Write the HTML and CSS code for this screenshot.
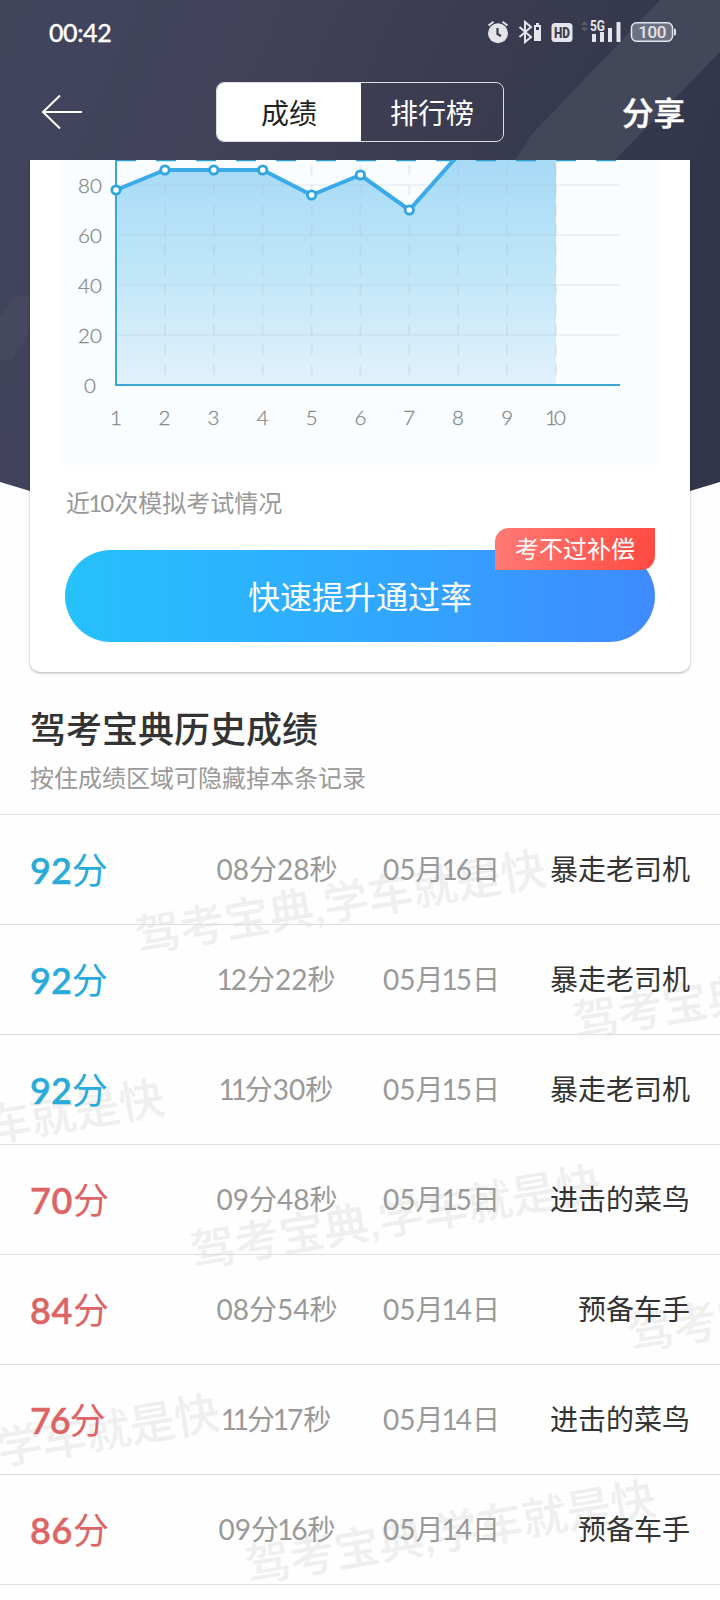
FILE: index.html
```html
<!DOCTYPE html>
<html lang="zh-CN">
<head>
<meta charset="utf-8">
<title>成绩</title>
<link rel="stylesheet" href="styles.css">
</head>
<body>
<div class="screen">
  <svg class="backdrop" width="720" height="510" viewBox="0 0 720 510" aria-hidden="true">
    <defs>
      <linearGradient id="night" x1="0" y1="0" x2="1" y2="0.3">
        <stop offset="0" stop-color="#41465d"/>
        <stop offset="0.35" stop-color="#41415a"/>
        <stop offset="0.6" stop-color="#3b3c51"/>
        <stop offset="1" stop-color="#32364a"/>
      </linearGradient>
    </defs>
    <path d="M0 0H720V482L690 491L360 510L30 491L0 482Z" fill="url(#night)"/>
    <path d="M660 0H720V52L615 160H515L533 133Z" fill="#424759"/>
    <path d="M0 318L14 296H30V330L12 360H0Z" fill="#4b5062" fill-opacity=".45"/>
  </svg>

  <header class="top">
    <div class="status">
      <span class="clock">00:42</span>
      <svg class="status-icons" width="196" height="28" viewBox="484 18 196 28" fill="#e4e4ea">
        <circle cx="498" cy="33.200" r="10"/>
        <path d="M488.500 25.500L493.500 21.800M507.500 25.500L502.500 21.800" stroke="#e4e4ea" stroke-width="2" fill="none"/>
        <path d="M497.500 28V34L501 36" stroke="#3b3b51" stroke-width="2.200" fill="none"/>
        <path d="M519.500 27L531 37L525 42V22L531 27L519.500 37" stroke="#e4e4ea" stroke-width="2" fill="none"/>
        <path fill-rule="evenodd" d="M536 23h3v2h2v16h-7V25h2ZM536 27v3h3v-3Z"/>
        <rect x="551.500" y="23" width="21" height="19" rx="3.500"/>
        <text class="hd" x="562" y="37.500" text-anchor="middle" textLength="16" lengthAdjust="spacingAndGlyphs">HD</text>
        <path d="M581 25l3.500-4 3.500 4ZM581 27.500h7l-3.500 4Z" fill="#5d5f70"/>
        <text class="net" x="590" y="30.500" textLength="15" lengthAdjust="spacingAndGlyphs">5G</text>
        <path d="M592 34h4v8h-4ZM600 32h4v10h-4ZM608 28h4v14h-4ZM616.500 22h4v20h-4Z"/>
        <rect x="631.500" y="22.800" width="41" height="18.400" rx="5" fill="#6d7080" stroke="#e4e4ea" stroke-width="1.500"/>
        <path d="M674 28.500q2 0 2 1.500v4q0 1.500-2 1.500Z"/>
        <text class="charge" x="652.300" y="37.700" text-anchor="middle" textLength="28">100</text>
      </svg>
    </div>
    <nav class="bar">
      <svg class="back" width="42" height="36" viewBox="0 0 42 36" fill="none" stroke="#fff" stroke-width="2"><path d="M19 1.500L2 18L19 34.500M2 18H41"/></svg>
      <div class="tabs"><span class="tab tab-on">成绩</span><span class="tab">排行榜</span></div>
      <span class="share">分享</span>
    </nav>
  </header>

  <section class="card">
    <svg class="chart" width="600" height="305" viewBox="60 160 600 305">
      <defs>
        <linearGradient id="area" x1="0" y1="160" x2="0" y2="385" gradientUnits="userSpaceOnUse">
          <stop offset="0" stop-color="#a7daf6"/>
          <stop offset="0.4" stop-color="#bae4f8"/>
          <stop offset="1" stop-color="#e2f1fc"/>
        </linearGradient>
      </defs>
      <rect x="60" y="160" width="600" height="305" fill="#f9fdff"/>
      <path d="M116 190L164.900 170H262.700L311.600 195L360.400 175L409.300 210L458.200 155H556V385H116Z" fill="url(#area)"/>
      <path d="M116 185H620M116 235H620M116 285H620M116 335H620" stroke="#b0b8bc" stroke-opacity=".15" stroke-width="2"/>
      <path d="M165 165V385M214 165V385M262.700 165V385M311.600 165V385M360.500 165V385M409.300 165V385M458.200 165V385M507 165V385M556 165V385" stroke="#b0b8bc" stroke-opacity=".24" stroke-width="2" stroke-dasharray="10 10"/>
      <path d="M116 160V385H620" fill="none" stroke="#3ba5d3" stroke-width="2"/>
      <path d="M116 160H620" stroke="#2f9fd0" stroke-width="2.400" stroke-dasharray="20 20"/>
      <path d="M116 190L164.900 170H262.700L311.600 195L360.400 175L409.300 210L458.200 155" fill="none" stroke="#3aabe8" stroke-width="4"/>
      <g fill="#fff" stroke="#2ea5e0" stroke-width="2.800">
        <circle cx="116" cy="190" r="4.200"/><circle cx="164.900" cy="170" r="4.200"/><circle cx="213.800" cy="170" r="4.200"/><circle cx="262.700" cy="170" r="4.200"/><circle cx="311.600" cy="195" r="4.200"/><circle cx="360.400" cy="175" r="4.200"/><circle cx="409.300" cy="210" r="4.200"/>
      </g>
      <g class="axis">
        <text x="90" y="193">80</text><text x="90" y="243">60</text><text x="90" y="293">40</text><text x="90" y="343">20</text><text x="90" y="393">0</text>
        <text x="116" y="425">1</text><text x="164.500" y="425">2</text><text x="213.500" y="425">3</text><text x="262.700" y="425">4</text><text x="311.600" y="425">5</text><text x="360.500" y="425">6</text><text x="409.300" y="425">7</text><text x="458" y="425">8</text><text x="507.300" y="425">9</text><text x="555.500" y="425" textLength="21">10</text>
      </g>
    </svg>
    <p class="caption">近<b class="one">1</b>0次模拟考试情况</p>
    <div class="cta"><span class="cta-text">快速提升通过率</span><span class="badge">考不过补偿</span></div>
  </section>

  <section class="history">
    <h1 class="title">驾考宝典历史成绩</h1>
    <p class="hint">按住成绩区域可隐藏掉本条记录</p>
    <div class="records">
      <svg class="watermark" width="720" height="786" viewBox="0 814 720 786" aria-hidden="true">
        <text transform="translate(138.500 952) rotate(-9.600)">驾考宝典,学车就是快</text>
        <text transform="translate(576.500 1037) rotate(-9.600)">驾考宝典,学车就是快</text>
        <text transform="translate(-243 1181) rotate(-9.600)">驾考宝典,学车就是快</text>
        <text transform="translate(193.500 1267) rotate(-9.600)">驾考宝典,学车就是快</text>
        <text transform="translate(631.500 1350) rotate(-9.600)">驾考宝典,学车就是快</text>
        <text transform="translate(-188 1496) rotate(-9.600)">驾考宝典,学车就是快</text>
        <text transform="translate(248.500 1582) rotate(-9.600)">驾考宝典,学车就是快</text>
      </svg>
      <div class="row"><span class="score pass"><b>92</b>分</span><span class="time">08分28秒</span><span class="date">05月<b class="one">1</b>6日</span><span class="name">暴走老司机</span></div>
      <div class="row"><span class="score pass"><b>92</b>分</span><span class="time"><b class="one">1</b>2分22秒</span><span class="date">05月<b class="one">1</b>5日</span><span class="name">暴走老司机</span></div>
      <div class="row"><span class="score pass"><b>92</b>分</span><span class="time"><b class="one">1</b><b class="one">1</b>分30秒</span><span class="date">05月<b class="one">1</b>5日</span><span class="name">暴走老司机</span></div>
      <div class="row"><span class="score fail"><b class="wide">70</b>分</span><span class="time">09分48秒</span><span class="date">05月<b class="one">1</b>5日</span><span class="name">进击的菜鸟</span></div>
      <div class="row"><span class="score fail"><b class="wide">84</b>分</span><span class="time">08分54秒</span><span class="date">05月<b class="one">1</b>4日</span><span class="name">预备车手</span></div>
      <div class="row"><span class="score fail"><b class="tight">76</b>分</span><span class="time"><b class="one">1</b><b class="one">1</b>分<b class="one">1</b>7秒</span><span class="date">05月<b class="one">1</b>4日</span><span class="name">进击的菜鸟</span></div>
      <div class="row"><span class="score fail"><b class="wide">86</b>分</span><span class="time">09分<b class="one">1</b>6秒</span><span class="date">05月<b class="one">1</b>4日</span><span class="name">预备车手</span></div>
    </div>
  </section>
</div>
</body>
</html>
```
FILE: styles.css
```css
* { box-sizing: border-box; margin: 0; padding: 0; }
body { background: #fff; font-family: Lato, "Noto Sans CJK SC", sans-serif; color: #333; }
.screen { position: relative; width: 720px; height: 1600px; overflow: hidden; background: #fefefe; }
.backdrop { position: absolute; left: 0; top: 0; }

.top { position: relative; height: 160px; }
.status { height: 64px; display: flex; justify-content: space-between; align-items: center; padding: 0 40px 0 49px; }
.clock { color: #fff; font-size: 25px; line-height: 30px; font-weight: 500; letter-spacing: -.4px; -webkit-text-stroke: .3px #fff; }
.status-icons { display: block; }
.hd { font: 900 14px Roboto, sans-serif; fill: #3b3b51; }
.net { font: 700 14px Roboto, sans-serif; }
.charge { font: 500 17px Roboto, sans-serif; fill: #e4e4ea; }
.bar { display: grid; grid-template-columns: 1fr 288px 1fr; align-items: center; height: 96px; padding: 0 35px 0 41px; }
.back { display: block; }
.tabs { display: flex; height: 60px; border: 1px solid #dcdce2; border-radius: 8px; overflow: hidden; margin-left: -3px; margin-right: 3px; }
.tab { flex: 1; display: flex; align-items: center; justify-content: center; color: #fff; font-size: 28px; }
.tab-on { flex: 0 0 144px; background: #fff; color: #222; }
.share { justify-self: end; margin-top: -3px; color: #fff; font-size: 31.500px; font-weight: 500; -webkit-text-stroke: .5px #fff; }

.card { position: relative; height: 512px; margin: 0 30px; padding: 0 30px; background: #fff; border-radius: 0 0 10px 10px; box-shadow: 0 1px 3px rgba(0, 0, 0, .3); clip-path: inset(0 -6px -6px); }
.chart { display: block; }
.axis text { font-family: Lato, sans-serif; font-size: 20.500px; font-weight: 300; fill: #808080; stroke: #909090; stroke-width: .3px; text-anchor: middle; }
.caption { margin: 20px 0 0 6px; font-size: 24px; line-height: 36px; color: #999; }
.one { font-weight: inherit; margin: 0 -.075em; }
.cta { position: relative; margin: 29px 5px 0; height: 92px; border-radius: 46px; background: linear-gradient(90deg, #26c1fd, #30a9ff 50%, #3f8aff); color: #fff; font-size: 32px; display: flex; align-items: center; justify-content: center; }
.cta-text { padding-bottom: 3px; }
.badge { position: absolute; right: 0; top: -22px; width: 160px; height: 42px; border-radius: 14px 0 14px 0; background: linear-gradient(100deg, #ff7a75, #ff4a41); font-size: 24px; line-height: 42px; text-align: center; }

.history { padding-top: 34px; }
.title { margin-left: 30px; font-size: 36px; line-height: 46px; font-weight: 500; color: #333; }
.hint { margin: 8px 0 0 30px; font-size: 24px; line-height: 36px; color: #999; }
.records { position: relative; margin-top: 18px; border-top: 1px solid #dcdfe1; }
.watermark { position: absolute; left: 0; top: 0; }
.watermark text { font-size: 45px; font-weight: 500; fill: #efefef; }
.row { position: relative; display: grid; grid-template-columns: 167px 160px 166px 1fr; align-items: center; height: 110px; padding: 0 30px 3px; border-bottom: 1px solid #dcdfe1; font-size: 28px; color: #999; }
.score { font-size: 36px; }
.score b { font-weight: 600; -webkit-text-stroke: .4px currentColor; }
.wide { letter-spacing: .6px; }
.tight { letter-spacing: -1.200px; }
.pass { color: #29abd9; }
.fail { color: #dc6464; }
.time { text-align: center; }
.date { padding-left: 3px; text-align: center; }
.name { text-align: right; color: #333; }
```
